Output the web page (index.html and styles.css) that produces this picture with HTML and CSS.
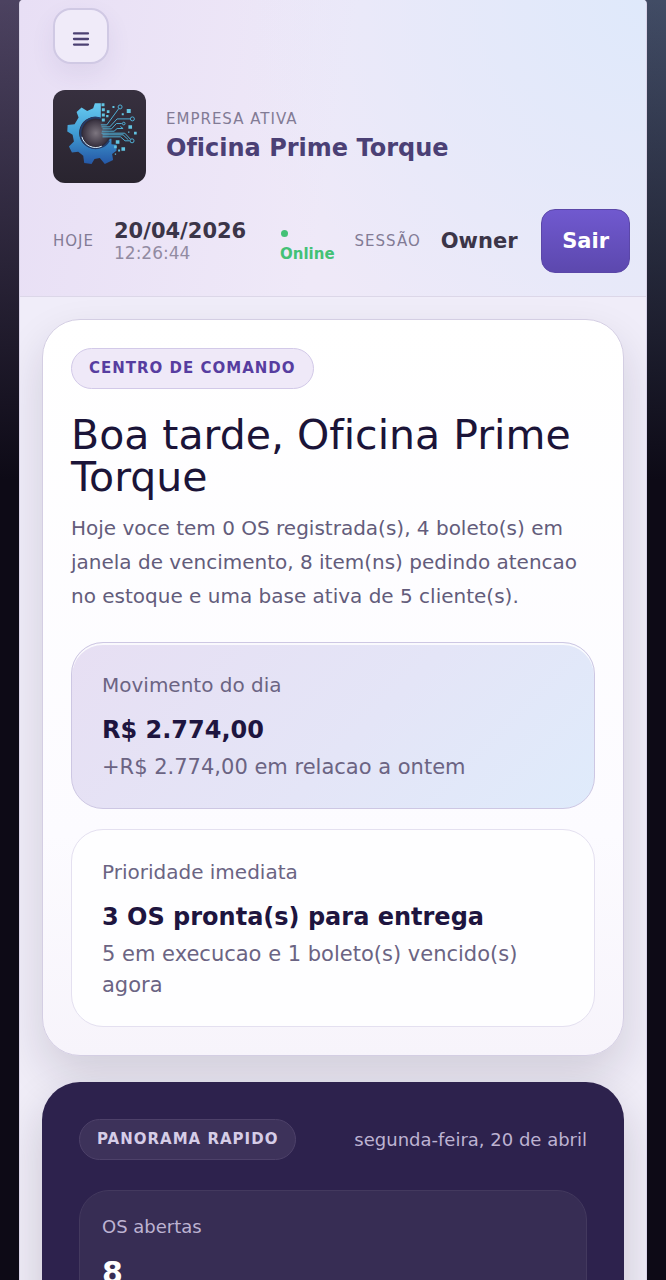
FILE: index.html
```html
<!DOCTYPE html>
<html lang="pt-BR">

<head>
    <meta charset="UTF-8">
    <meta name="viewport" content="width=device-width, initial-scale=1.0">
    <title>Oficina Prime Torque</title>
    <link rel="stylesheet" href="styles.css">
</head>

<body>
    <div class="app-shell">
        <header class="topbar">
            <button class="menu-btn" type="button" aria-label="Menu">
                <svg width="18" height="16" viewBox="0 0 18 16" fill="none" stroke="currentColor" stroke-width="2.3" stroke-linecap="round">
                    <path d="M2 2.4h14M2 8h14M2 13.6h14" />
                </svg>
            </button>

            <div class="company">
                <svg class="company-logo" viewBox="159 267 280 280" aria-hidden="true">
                    <defs>
                        <linearGradient id="gearFill" x1="0" y1="0" x2="0" y2="1">
                            <stop offset="0" stop-color="#67cbf1" />
                            <stop offset="0.5" stop-color="#3f9bd3" />
                            <stop offset="1" stop-color="#2557a5" />
                        </linearGradient>
                        <radialGradient id="coreFill">
                            <stop offset="0" stop-color="#7d7680" />
                            <stop offset="1" stop-color="#38313f" />
                        </radialGradient>
                    </defs>
                    <!-- left part of the gear -->
                    <path fill="url(#gearFill)" d="M303 307H285L280 322L262 330L245 320L230 333L236 350L224 370L203 372L202 392L218 402L222 422L207 437L216 455L235 453L250 465L253 487L275 490L284 475L300 472L315 490L340 478L337 460L350 450V432L335 430V414H330A48 48 0 1 1 303 351Z" />
                    <path d="M303 353A46 46 0 1 0 328 419" fill="none" stroke="#243d6b" stroke-width="5" />
                    <path d="M246 408A43 43 0 0 0 306 436" fill="none" stroke="#dcecf5" stroke-width="3" />
                    <circle cx="288" cy="397" r="40" fill="url(#coreFill)" />
                    <!-- circuit tracks -->
                    <g fill="none" stroke="#4fb0d6" stroke-width="3">
                        <path d="M303 372H321L357 323M305 378H330L352 354H391M308 384H335L350 368H366M306 391H343L352 383H370L362 377M305 397H375L392 415M308 402H370L386 417M308 408H362L376 420H390" />
                        <circle cx="361" cy="318" r="6" />
                        <circle cx="398" cy="354" r="6" />
                        <circle cx="372" cy="368" r="4" />
                        <circle cx="397" cy="420" r="6" />
                    </g>
                    <!-- loose pixels -->
                    <g fill="#62c4e2">
                        <path d="M305 307h9v9h-9zM306 322h9v9h-9zM306 338h9v9h-9zM306 353h9v9h-9zM321 328h8v8h-8zM319 342h7v7h-7zM338 315h6v6h-6zM381 324h12v12h-12zM366 337h6v6h-6zM386 373h11v11h-11zM403 393h8v8h-8zM385 392h4v4h-4zM348 418h11v11h-11zM365 439h11v11h-11zM343 434h8v8h-8zM355 446h6v6h-6zM345 458h4v4h-4z" />
                    </g>
                </svg>
                <div class="company-text">
                    <span class="label">EMPRESA ATIVA</span>
                    <strong class="company-name">Oficina Prime Torque</strong>
                </div>
            </div>

            <div class="session-row">
                <span class="label">HOJE</span>
                <div class="clock">
                    <strong>20/04/2026</strong>
                    <span>12:26:44</span>
                </div>
                <div class="online">
                    <span class="online-dot"></span>
                    Online
                </div>
                <span class="label">SESSÃO</span>
                <strong class="user">Owner</strong>
                <button class="logout-btn" type="button">Sair</button>
            </div>
        </header>

        <main class="content">
            <section class="hero">
                <span class="badge">CENTRO DE COMANDO</span>
                <h1>Boa tarde, Oficina Prime Torque</h1>
                <p class="summary">Hoje voce tem 0 OS registrada(s), 4 boleto(s) em janela de vencimento, 8 item(ns) pedindo atencao no estoque e uma base ativa de 5 cliente(s).</p>

                <div class="hero-cards">
                    <article class="info-card highlight">
                        <span>Movimento do dia</span>
                        <strong>R$ 2.774,00</strong>
                        <small>+R$ 2.774,00 em relacao a ontem</small>
                    </article>
                    <article class="info-card">
                        <span>Prioridade imediata</span>
                        <strong>3 OS pronta(s) para entrega</strong>
                        <small>5 em execucao e 1 boleto(s) vencido(s) agora</small>
                    </article>
                </div>
            </section>

            <section class="overview">
                <div class="overview-head">
                    <span class="badge badge-dark">PANORAMA RAPIDO</span>
                    <span class="date">segunda-feira, 20 de abril</span>
                </div>
                <article class="stat-card">
                    <span>OS abertas</span>
                    <strong>8</strong>
                </article>
            </section>
        </main>
    </div>
</body>

</html>
```

FILE: styles.css
```css
* {
    box-sizing: border-box;
}

body {
    margin: 0;
    height: 100vh;
    overflow: hidden;
    padding: 0 19px;
    font-family: Verdana, 'DejaVu Sans', sans-serif;
    font-variant-ligatures: none;
    color: #1d153b;
    background: linear-gradient(180deg, rgba(13, 10, 22, 0) 0, #0d0a16 480px), linear-gradient(90deg, #4c4260, #414c65);
}

button {
    font-family: inherit;
    cursor: pointer;
}

.app-shell {
    height: 100%;
    overflow: hidden;
    border: 1px solid #d9d3e8;
    border-width: 0 1px;
    border-radius: 4px 4px 0 0;
    background: linear-gradient(180deg, #f0edf9 300px, #f0edf7);
}

/* top bar */
.topbar {
    padding: 8px 16px 23px 33px;
    border-bottom: 1px solid #dcd7e8;
    background: radial-gradient(circle at 100% 0, #dfe9fb, rgba(223, 233, 251, 0) 60%), linear-gradient(100deg, #e8dff5, #efe9f8 50%, #ebe9f8);
}

.menu-btn {
    display: flex;
    align-items: center;
    justify-content: center;
    width: 56px;
    height: 56px;
    padding: 6px 0 0;
    color: #4c4173;
    border: 2px solid #d0c9e4;
    border-radius: 18px;
    background: #f0ebf9;
    box-shadow: 0 10px 24px rgba(76, 56, 130, 0.08);
}

.company {
    display: flex;
    align-items: center;
    gap: 20px;
    margin-top: 26px;
}

.company-logo {
    width: 93px;
    height: 93px;
    border-radius: 12px;
    background: linear-gradient(180deg, #37303f, #29242f);
}

.company-text {
    display: flex;
    flex-direction: column;
    gap: 4px;
    padding-bottom: 2px;
}

.label {
    font-size: 15px;
    line-height: 20px;
    letter-spacing: 1px;
    color: #827b95;
}

.company-name {
    font-size: 24px;
    line-height: 30px;
    color: #4b4075;
}

.session-row {
    display: flex;
    align-items: center;
    gap: 20px;
    margin-top: 26px;
}

.clock {
    display: flex;
    flex-direction: column;
    min-width: 146px;
}

.clock strong,
.user {
    font-size: 21px;
    line-height: 24px;
    color: #3b3548;
}

.clock span {
    font-size: 17px;
    line-height: 20px;
    color: #928ba2;
}

.online {
    padding-top: 8px;
    font-size: 15px;
    font-weight: bold;
    line-height: 22px;
    color: #43c176;
}

.online-dot {
    display: block;
    width: 7px;
    height: 7px;
    margin: 4px 0 6px 1px;
    border-radius: 50%;
    background: #43c176;
}

.logout-btn {
    height: 64px;
    margin-left: auto;
    padding: 0 20px;
    font-size: 21px;
    font-weight: bold;
    color: #fff;
    border: 1px solid #5b47a8;
    border-radius: 14px;
    background: linear-gradient(180deg, #7059cf, #5c48ae);
}

/* main area */
.content {
    padding: 22px;
}

.hero {
    padding: 28px;
    border: 1px solid #d4cee3;
    border-radius: 38px;
    background: linear-gradient(180deg, #fff, #fcfbff 70%, #f7f4fb);
    box-shadow: 0 20px 44px rgba(30, 20, 50, 0.14);
}

.badge {
    display: inline-block;
    padding: 9px 17px;
    font-size: 15px;
    font-weight: bold;
    line-height: 21px;
    letter-spacing: 1px;
    color: #573da0;
    border: 1px solid #d2c9e8;
    border-radius: 21px;
    background: #efe9f8;
}

h1 {
    margin: 25px 0 13px;
    font-size: 41px;
    font-weight: normal;
    line-height: 42px;
    color: #1b1438;
}

.summary {
    margin: 0;
    font-size: 20px;
    line-height: 34px;
    color: #635c7b;
}

.hero-cards {
    display: flex;
    flex-direction: column;
    gap: 20px;
    margin-top: 29px;
}

.info-card {
    display: flex;
    flex-direction: column;
    padding: 27px 30px 25px;
    border: 1px solid #e4e0f0;
    border-radius: 32px;
    background: #fefeff;
}

.info-card.highlight {
    border-color: #cdc7e3;
    background: linear-gradient(135deg, #e7dff3, #e4e5f7 55%, #dfebfb);
    box-shadow: inset 0 2px 0 rgba(255, 255, 255, 0.8);
}

.info-card span,
.info-card small {
    font-size: 20px;
    line-height: 31px;
    color: #6b6483;
}

.info-card small {
    font-size: 21px;
}

.info-card strong {
    margin: 11px 0 4px;
    font-size: 24px;
    line-height: 36px;
    color: #1e153f;
}

/* dark panel */
.overview {
    margin-top: 26px;
    padding: 37px;
    border-radius: 38px;
    background: #2d224d;
    box-shadow: 0 20px 44px rgba(30, 20, 50, 0.18);
}

.overview-head {
    display: flex;
    align-items: center;
    justify-content: space-between;
}

.badge-dark {
    color: #d6cde7;
    border-color: #4d4169;
    background: #3d325a;
}

.date {
    font-size: 18px;
    color: #bdb3d2;
}

.stat-card {
    display: flex;
    flex-direction: column;
    margin-top: 30px;
    padding: 22px;
    border: 1px solid #43395e;
    border-radius: 30px;
    background: #372d54;
}

.stat-card span {
    font-size: 18px;
    line-height: 28px;
    color: #bdb3d2;
}

.stat-card strong {
    margin-top: 12px;
    font-size: 30px;
    line-height: 40px;
    color: #fff;
}
```
